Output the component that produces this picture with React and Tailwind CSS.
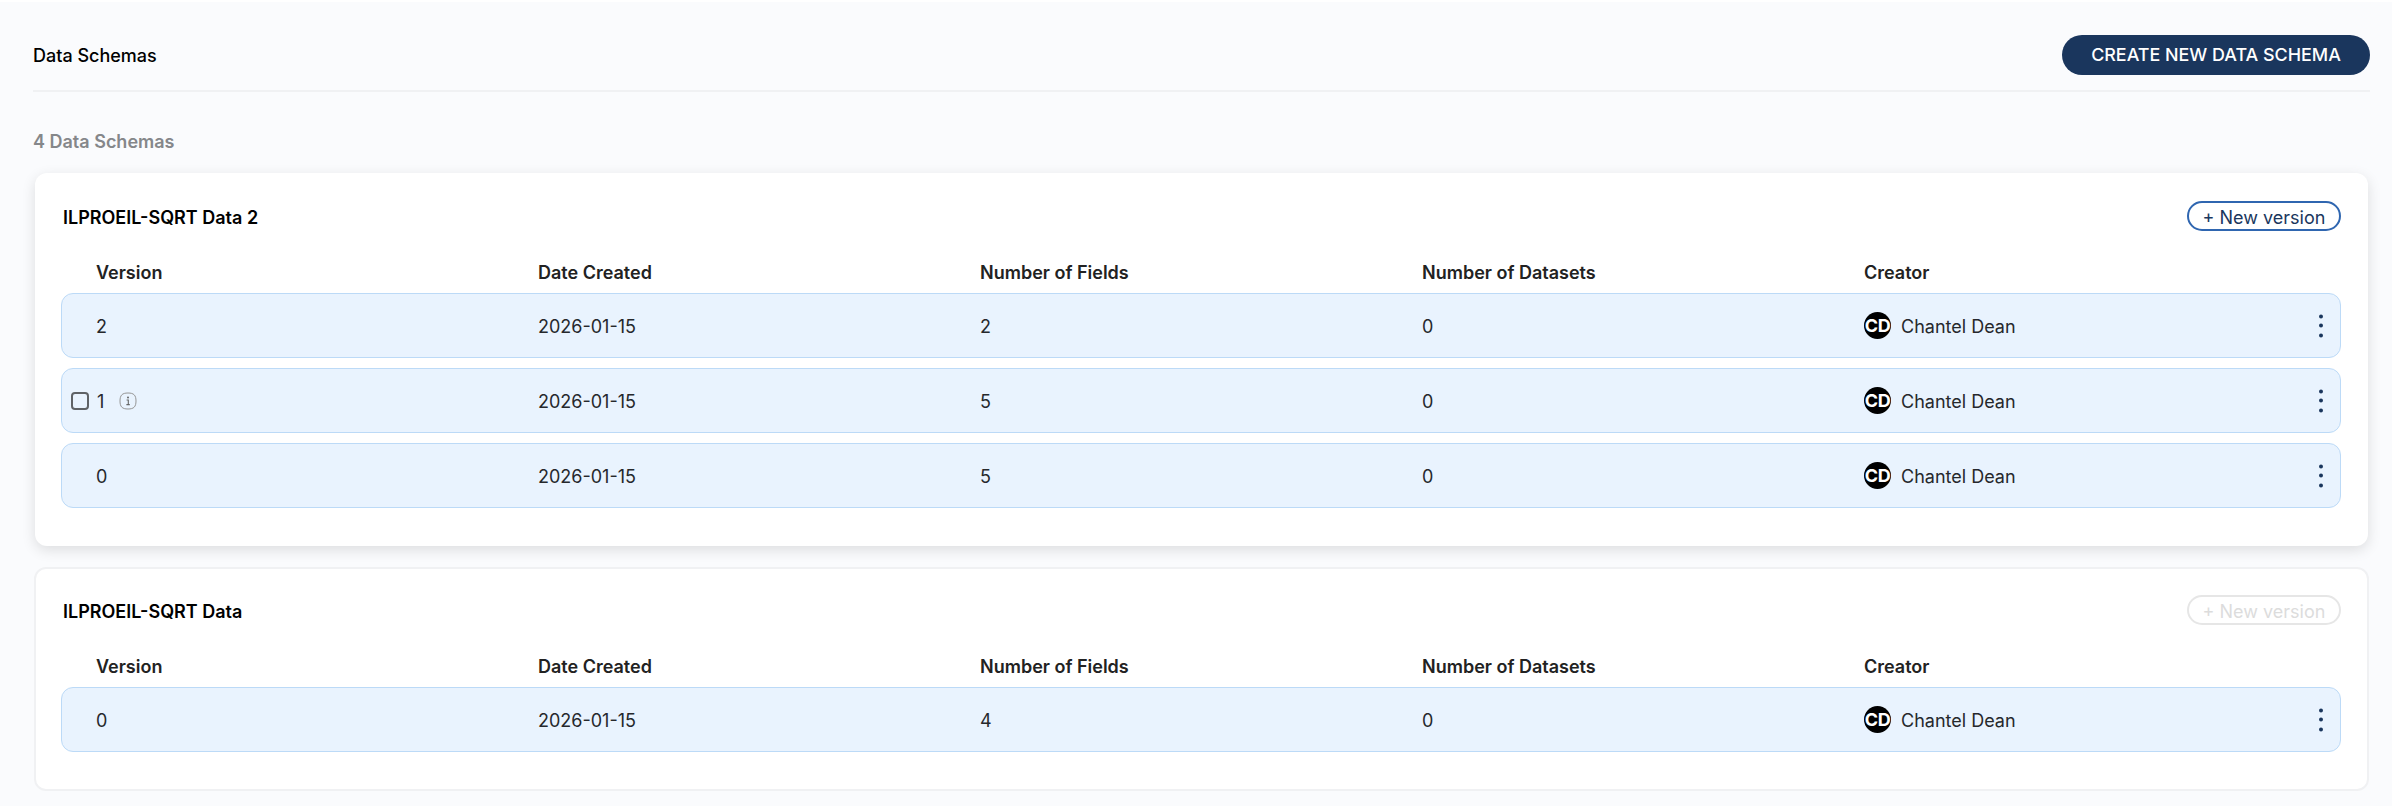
const FONT = "font-['Inter','Liberation_Sans',sans-serif]";

const schemas = [
  {
    name: "ILPROEIL-SQRT Data 2",
    active: true,
    rows: [
      { version: "2", date: "2026-01-15", fields: 2, datasets: 0 },
      { version: "1", date: "2026-01-15", fields: 5, datasets: 0, legacy: true },
      { version: "0", date: "2026-01-15", fields: 5, datasets: 0 },
    ],
  },
  {
    name: "ILPROEIL-SQRT Data",
    active: false,
    rows: [{ version: "0", date: "2026-01-15", fields: 4, datasets: 0 }],
  },
];

const InfoIcon = () => (
  <svg viewBox="0 0 18 18" className="w-[18px] h-[18px]" fill="none">
    <path
      d="M9 1c5.8 0 8 2.2 8 8s-2.2 8-8 8-8-2.2-8-8 2.2-8 8-8z"
      stroke="#969696"
      strokeWidth="1"
    />
    <circle cx="9" cy="5.6" r="1" fill="#666" />
    <path d="M7.6 8h1.7v4.4M7.4 12.6h3.4" stroke="#666" strokeWidth="1.1" />
  </svg>
);

const Row = ({ row }) => (
  <div className="h-[65px] rounded-xl border border-[#bcdaf7] bg-[#e9f3fe] pl-[34px] grid grid-cols-[repeat(5,442px)] items-center relative text-[18px] text-[#26282c]">
    <div className="flex items-center">
      {row.legacy && (
        <span className="-ml-[25px] mr-[8px] w-[18px] h-[18px] rounded-[4px] border-2 border-[#5f6266]" />
      )}
      <span className="pt-[2px]">{row.version}</span>
      {row.legacy && (
        <span className="ml-[15px]">
          <InfoIcon />
        </span>
      )}
    </div>
    <div className="pt-[2px]">{row.date}</div>
    <div className="pt-[2px]">{row.fields}</div>
    <div className="pt-[2px]">{row.datasets}</div>
    <div className="flex items-center">
      <span className="w-[27px] h-[27px] rounded-full bg-black text-white font-bold text-[18px] tracking-[-0.5px] flex items-center justify-center">
        CD
      </span>
      <span className="ml-[10px] pt-[2px]">Chantel Dean</span>
    </div>
    <div className="absolute right-[17px] top-1/2 -translate-y-1/2 flex flex-col gap-[5.5px]">
      <span className="w-1 h-1 rounded-full bg-[#1a365d]" />
      <span className="w-1 h-1 rounded-full bg-[#1a365d]" />
      <span className="w-1 h-1 rounded-full bg-[#1a365d]" />
    </div>
  </div>
);

const SchemaCard = ({ schema }) => (
  <section
    className={
      schema.active
        ? "mx-[2px] rounded-xl bg-white shadow-[0_4px_14px_rgba(0,0,0,0.12)] pt-[28px] pb-[38px] pl-[26px] pr-[27px]"
        : "mx-[1px] mt-[21px] rounded-xl bg-white border-2 border-[#f0f1f3] pt-[26px] pb-[37px] pl-[25px] pr-[26px]"
    }
  >
    <div className="flex items-center justify-between h-[30px] pl-[2px]">
      <h2 className="pt-[2px] text-[18px] font-semibold text-black">{schema.name}</h2>
      <button
        className={
          schema.active
            ? "w-[154px] h-[30px] pt-[2px] rounded-full border-2 border-[#2f66b0] text-[#1a365d] text-[18px] flex items-center justify-center"
            : "w-[154px] h-[30px] pt-[2px] rounded-full border-2 border-[#e6e6e6] text-[#dcdcdc] text-[18px] flex items-center justify-center"
        }
      >
        + New version
      </button>
    </div>
    <div className="pl-[35px] mt-[28px] mb-[12px] h-[22px] grid grid-cols-[repeat(5,442px)] items-center text-[18px] font-semibold text-[#222]">
      <div>Version</div>
      <div>Date Created</div>
      <div>Number of Fields</div>
      <div>Number of Datasets</div>
      <div>Creator</div>
    </div>
    <div className="flex flex-col gap-[10px]">
      {schema.rows.map((row) => (
        <Row key={row.version} row={row} />
      ))}
    </div>
  </section>
);

export default function App() {
  return (
    <div className={`${FONT} h-[806px] bg-white pt-[2px] overflow-hidden`}>
      <div className="h-[804px] bg-[#fafbfd] pl-[33px] pr-[22px]">
        <header className="flex items-center justify-between pt-[33px] pb-[15px] border-b-2 border-[#f0f1f3]">
          <h1 className="text-[18px] font-medium text-black">Data Schemas</h1>
          <button className="w-[308px] h-10 pt-px rounded-full bg-[#1a365d] text-white text-[17.9px] font-medium">
            CREATE NEW DATA SCHEMA
          </button>
        </header>
        <p className="mt-[39px] mb-[20px] h-[22px] leading-[22px] text-[18px] font-semibold text-[#85878a]">
          4 Data Schemas
        </p>
        {schemas.map((schema) => (
          <SchemaCard key={schema.name} schema={schema} />
        ))}
      </div>
    </div>
  );
}
